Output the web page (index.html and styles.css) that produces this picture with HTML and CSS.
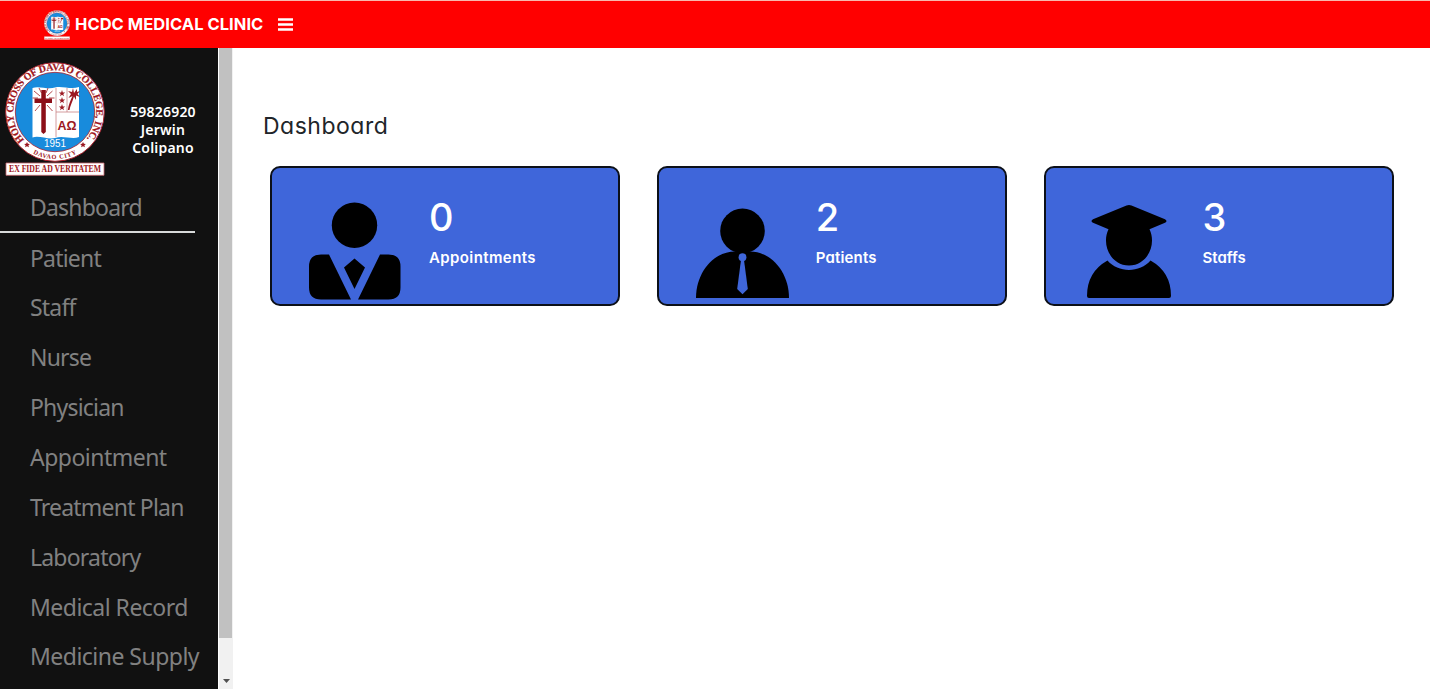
FILE: index.html
```html
<!DOCTYPE html>
<html lang="en">
<head>
<meta charset="utf-8">
<title>HCDC Medical Clinic</title>
<link rel="stylesheet" href="styles.css">
</head>
<body>
<header class="topbar">
  <svg class="topbar-logo" viewBox="0 0 100 114"><use href="#seal"/></svg>
  <span class="brand">HCDC MEDICAL CLINIC</span>
  <svg class="menu" viewBox="0 0 15 13"><path d="M0 1.5H15M0 6.5H15M0 11.5H15" stroke="#fff" stroke-width="2.4"/></svg>
</header>
<div class="layout">
  <aside class="sidebar">
    <div class="profile">
      <svg class="seal" viewBox="0 0 100 114">
        <defs>
          <path id="arcTop" d="M19.300 78A41.500 41.500 0 1 1 82 76"/>
          <path id="arcBottom" d="M28 91.500A46.800 46.800 0 0 0 73 90.800"/>
          <symbol id="seal" viewBox="0 0 100 114">
            <circle cx="50" cy="50" r="49.3" fill="#fff" stroke="#a9202c" stroke-width="1"/>
            <circle cx="50" cy="50" r="39.7" fill="#188bdc" stroke="#a9202c" stroke-width=".8"/>
            <path d="M27.5 26C34 23.5 43 28 50 25.500C57 23.500 66 28 74 25V75C67 78 58 73 50 76C43 78 34 73 27.500 75.500Z" fill="#fff"/>
            <path d="M51 26V75M51 50H74M62 26V50" stroke="#c98387" stroke-width=".8"/>
            <path d="M29 29L35 34M47.500 29L42 34M34 26L36.500 31M43 26L41 31M27.500 36H33M44 36H49.500M30 49L35 43M47.500 49L42 43" stroke="#ad3439" stroke-width=".9"/>
            <path d="M36.300 28H40.800V36.500H47V41H40.800V70L38.500 72L36.300 70V41H29.500V36.500H36.300Z" fill="#8c0f18"/>
            <g fill="#9b1822">
              <path id="star" d="M57 28L57.800 30.400H60.200L58.300 31.900L59 34.300L57 32.800L55 34.300L55.700 31.900L53.800 30.400H56.200Z"/>
              <use href="#star" y="7"/><use href="#star" y="14"/>
              <path d="M69 31L72 27L72 30L75 29L72.500 32L75 35L71 33.500L71 38L69 34.500C67.500 40 65 44 64.500 48H62.800C63.500 43 65.500 38 67.500 34L63.500 36L66 32L63 29L67 30L68 26Z"/>
              <text x="52.500" y="67.500" textLength="19" lengthAdjust="spacingAndGlyphs" class="seal-greek">ΑΩ</text>
              <path d="M22 80l.9 1.800 2 .2-1.500 1.300.5 2-1.900-1-1.900 1 .5-2-1.500-1.300 2-.2ZM78 80l.9 1.800 2 .2-1.500 1.300.5 2-1.900-1-1.900 1 .5-2-1.500-1.300 2-.2Z"/>
            </g>
            <text x="39" y="85" textLength="22" lengthAdjust="spacingAndGlyphs" class="seal-year">1951</text>
            <text class="seal-name"><textPath href="#arcTop">HOLY CROSS OF DAVAO COLLEGE, INC.</textPath></text>
            <text class="seal-city"><textPath href="#arcBottom">DAVAO CITY</textPath></text>
            <path d="M1 101H99V113.300H1Z" fill="#fff" stroke="#c8686e" stroke-width=".8"/>
            <text x="4" y="110.300" textLength="92" lengthAdjust="spacingAndGlyphs" class="seal-motto">EX FIDE AD VERITATEM</text>
          </symbol>
        </defs>
        <use href="#seal"/>
      </svg>
      <div class="user"><span>59826920</span><span>Jerwin</span><span>Colipano</span></div>
    </div>
    <nav class="nav">
      <a class="item active">Dashboard</a>
      <a class="item">Patient</a>
      <a class="item">Staff</a>
      <a class="item">Nurse</a>
      <a class="item">Physician</a>
      <a class="item wide">Appointment</a>
      <a class="item">Treatment Plan</a>
      <a class="item">Laboratory</a>
      <a class="item wide">Medical Record</a>
      <a class="item wide">Medicine Supply</a>
    </nav>
  </aside>
  <div class="scrollbar">
    <div class="thumb"></div>
    <svg class="arrow" viewBox="0 0 7 4"><path d="M0 0H7L3.500 4Z" fill="#505050"/></svg>
  </div>
  <main class="main">
    <h1 class="title">Dashboard</h1>
    <div class="cards">
      <section class="card">
        <svg class="icon" viewBox="0 0 100 110">
          <circle cx="50.500" cy="26.300" r="22.700"/>
          <path d="M25 55.500H17Q5 55.500 5 67.500V88.500Q5 100.500 17 100.500H47ZM76 55.500H84.500Q96.500 55.500 96.500 67.500V88.500Q96.500 100.500 84.500 100.500H54ZM50.500 59.500L61 68.500L50.500 90L40 68.500Z"/>
        </svg>
        <div class="info"><strong class="count">0</strong><span class="label appointments">Appointments</span></div>
      </section>
      <section class="card">
        <svg class="icon" viewBox="0 0 100 110">
          <circle cx="51.500" cy="31.900" r="22.300"/>
          <path d="M5 99C5 73 23 52.500 44 52.500H59C80 52.500 98 73 98 99Z"/>
          <g fill="#3f66da"><circle cx="51.500" cy="58.200" r="3.900"/><path d="M50 61H53L56.800 90L51.500 95.200L46.200 90Z"/></g>
        </svg>
        <div class="info"><strong class="count">2</strong><span class="label patients">Patients</span></div>
      </section>
      <section class="card">
        <svg class="icon" viewBox="0 0 100 110">
          <path d="M48.500 6.500Q51 5.300 53.500 6.500L87 20.200Q90 22 87 23.800L71.500 30.300C79 46 69 66.500 51 66.500C33 66.500 23 46 30.500 30.300L15 23.800Q12 22 15 20.200Z"/>
          <path d="M29.500 61.500C40 74 62 74 72.500 61.500Q93 73 93 97Q93 99 91 99H11Q9 99 9 97Q9 73 29.500 61.500Z"/>
        </svg>
        <div class="info"><strong class="count">3</strong><span class="label">Staffs</span></div>
      </section>
    </div>
  </main>
</div>
</body>
</html>
```
FILE: styles.css
```css
* { box-sizing: border-box; }
body { margin: 0; height: 689px; overflow: hidden; background: #fff; font-family: "Noto Sans", sans-serif; }
.topbar { height: 48px; background: #f00; border-top: 1px solid #f8b9ae; display: flex; align-items: center; padding-left: 44px; color: #fff; }
.topbar-logo { width: 26px; height: 30px; margin-right: 5px; }
.brand { width: 189px; margin-top: -1px; font: 700 16.500px/24px Inter, sans-serif; letter-spacing: .05px; white-space: nowrap; }
.menu { width: 15px; height: 13px; margin-left: 14px; }
.layout { display: flex; height: 641px; }
.sidebar { width: 218px; flex: none; background: #111; overflow: hidden; }
.profile { display: flex; height: 135px; padding: 14px 0 0 5px; }
.seal { width: 100px; height: 114px; flex: none; }
.user { display: flex; flex-direction: column; flex: none; width: 116px; padding-top: 41px; align-items: center; color: #fff; font: 600 14px/18px "Noto Sans", sans-serif; letter-spacing: .2px; }
.seal-name { font: 700 10px "Liberation Serif", serif; letter-spacing: -.14px; fill: #a01621; stroke: #a01621; stroke-width: .2px; }
.seal-city { font: 700 6.300px "Liberation Serif", serif; letter-spacing: .7px; fill: #a01621; }
.seal-greek { font: 700 13px "Liberation Sans", sans-serif; }
.seal-year { font: 10px "Liberation Sans", sans-serif; fill: #fff; }
.seal-motto { font: 700 9.500px "Liberation Serif", serif; fill: #a01621; }
.nav { display: flex; flex-direction: column; }
.item { height: 49.850px; padding-left: 30px; color: #818181; font-size: 23px; line-height: 51px; letter-spacing: -.8px; white-space: nowrap; }
.wide { letter-spacing: -.52px; }
.active { width: 195px; height: 49.600px; line-height: 49px; border-bottom: 2px solid #d8dada; }
.scrollbar { width: 15px; flex: none; background: #f1f1f1; border-left: 1px solid #fff; display: flex; flex-direction: column; align-items: center; }
.thumb { width: 13px; height: 590px; background: #c1c1c1; margin-right: 1px; }
.arrow { width: 7px; height: 4px; margin-top: 41px; }
.main { flex: 1; padding: 61px 30px 0; }
.title { margin: 0; font: 400 23px/34px Inter, sans-serif; font-feature-settings: "cv11"; letter-spacing: .5px; color: #212529; }
.cards { display: grid; grid-template-columns: repeat(3, 350px); gap: 36.800px; padding: 23px 0 0 7px; }
.card { height: 140px; display: flex; background: #3f66da; border: 2px solid #0c1018; border-radius: 10px; }
.icon { width: 100px; height: 110px; margin: 31px 0 0 32px; }
.info { display: flex; flex-direction: column; padding: 25px 0 0 25px; color: #fff; font-family: Inter, sans-serif; }
.count { font-size: 38px; line-height: 49px; font-weight: 500; }
.label { font-size: 15px; line-height: 22px; margin-top: 5px; font-weight: 600; font-feature-settings: "cv11"; white-space: nowrap; }
.appointments { letter-spacing: .4px; }
.patients { letter-spacing: .15px; }
```
